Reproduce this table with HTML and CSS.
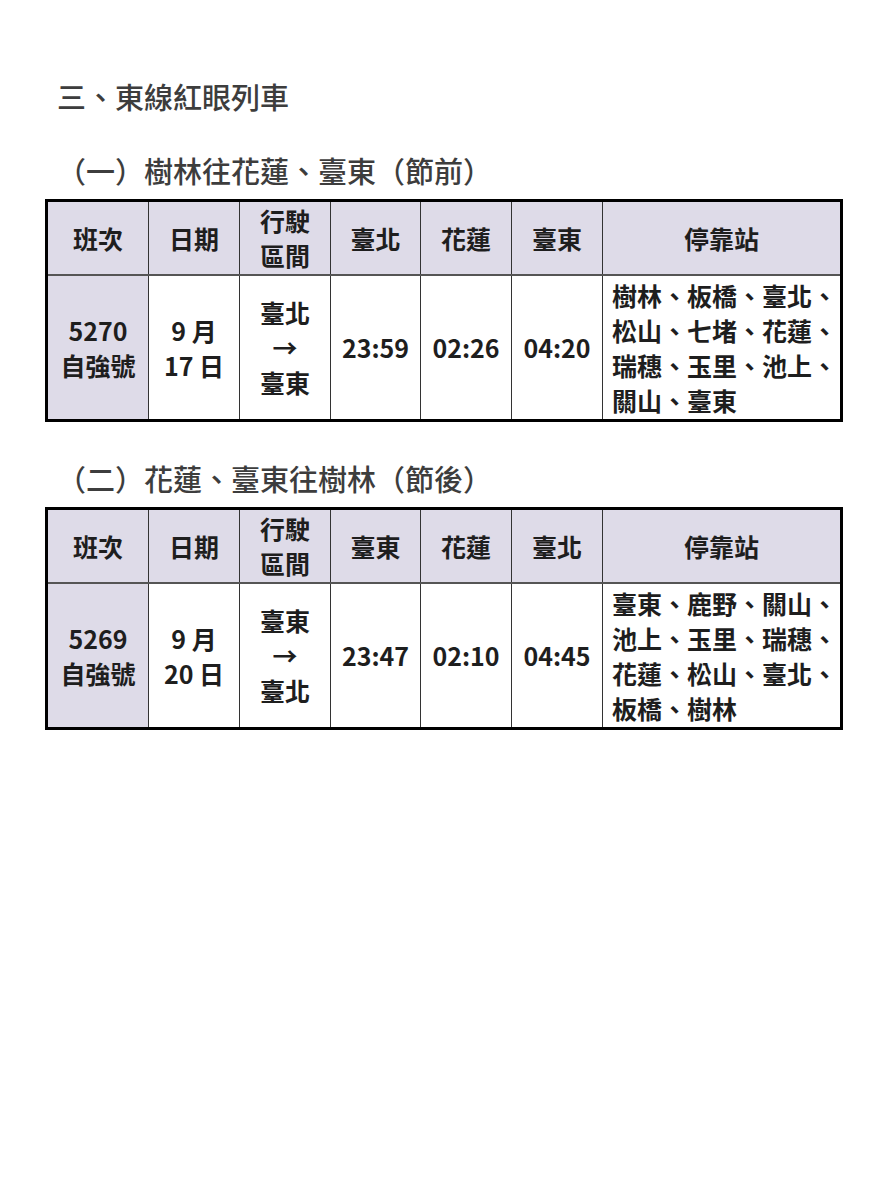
FILE: index.html
```html
<!DOCTYPE html>
<html lang="zh-Hant">
<head>
<meta charset="utf-8">
<link rel="stylesheet" href="styles.css">
</head>
<body>
<div class="page">
  <h1 class="title">三、東線紅眼列車</h1>

  <h2 class="subtitle">（一）樹林往花蓮、臺東（節前）</h2>
  <table class="sched">
    <tr class="head">
      <td class="c1">班次</td>
      <td class="c2">日期</td>
      <td class="c3">行駛<br>區間</td>
      <td class="c4">臺北</td>
      <td class="c5">花蓮</td>
      <td class="c6">臺東</td>
      <td class="c7">停靠站</td>
    </tr>
    <tr class="body">
      <td class="c1 shade">5270<br>自強號</td>
      <td class="c2">9 月<br>17 日</td>
      <td class="c3">臺北<br>→<br>臺東</td>
      <td class="c4">23:59</td>
      <td class="c5">02:26</td>
      <td class="c6">04:20</td>
      <td class="c7 stops">樹林、板橋、臺北、<br>松山、七堵、花蓮、<br>瑞穗、玉里、池上、<br>關山、臺東</td>
    </tr>
  </table>

  <h2 class="subtitle second">（二）花蓮、臺東往樹林（節後）</h2>
  <table class="sched">
    <tr class="head">
      <td class="c1">班次</td>
      <td class="c2">日期</td>
      <td class="c3">行駛<br>區間</td>
      <td class="c4">臺東</td>
      <td class="c5">花蓮</td>
      <td class="c6">臺北</td>
      <td class="c7">停靠站</td>
    </tr>
    <tr class="body">
      <td class="c1 shade">5269<br>自強號</td>
      <td class="c2">9 月<br>20 日</td>
      <td class="c3">臺東<br>→<br>臺北</td>
      <td class="c4">23:47</td>
      <td class="c5">02:10</td>
      <td class="c6">04:45</td>
      <td class="c7 stops">臺東、鹿野、關山、<br>池上、玉里、瑞穗、<br>花蓮、松山、臺北、<br>板橋、樹林</td>
    </tr>
  </table>
</div>
</body>
</html>
```

FILE: styles.css
```css
html, body {
  margin: 0;
  padding: 0;
  background: #ffffff;
}

body {
  font-family: "Noto Sans CJK TC", "Noto Sans", sans-serif;
  color: #222;
}

.page {
  padding: 82px 0 0 45px;
}

.title {
  margin: 0 0 0 12px;
  font-size: 29px;
  line-height: 29px;
  font-weight: 500;
  color: #3d3d3d;
}

.subtitle {
  margin: 45px 0 14px 12px;
  font-size: 29px;
  line-height: 29px;
  font-weight: 500;
  color: #3d3d3d;
}

.subtitle.second {
  margin-top: 42px;
  margin-bottom: 14px;
}

.sched {
  border-collapse: collapse;
  border: 3px solid #000;
  width: 798px;
  table-layout: fixed;
  font-size: 25px;
  line-height: 35px;
  font-weight: 700;
  color: #1e1e1e;
}

.sched td {
  border: 1px solid #333;
  text-align: center;
  vertical-align: middle;
  padding: 0;
}

.head td {
  background: #dedbe8;
  height: 72px;
  border-bottom: 2px solid #555;
}

.body td {
  height: 143px;
}

.shade {
  background: #dedbe8;
}

.c1 { width: 100px; }
.c2 { width: 90px; }
.c3 { width: 90px; }
.c4 { width: 89px; }
.c5 { width: 90px; }
.c6 { width: 90px; }
.c7 { width: auto; }

.sched td.stops {
  text-align: left;
  white-space: nowrap;
  padding: 0 0 0 9px;
}
```
